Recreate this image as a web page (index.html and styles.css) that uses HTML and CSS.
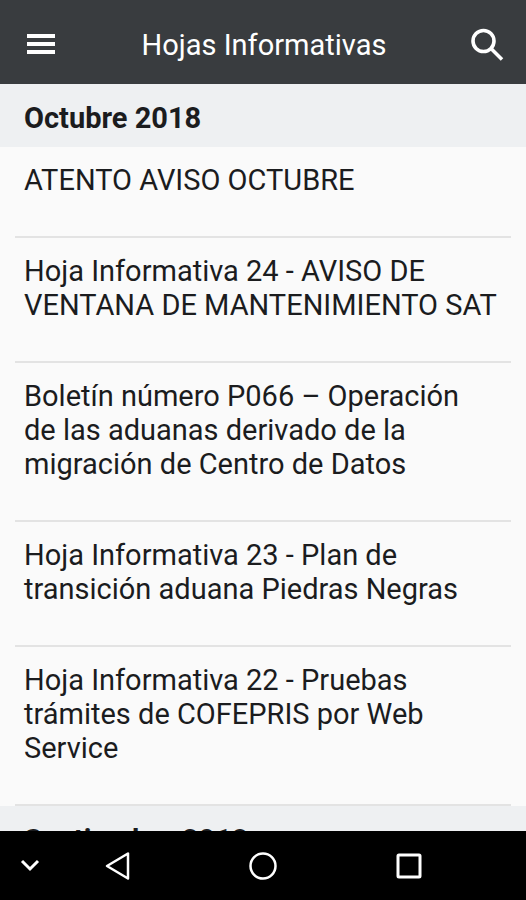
FILE: index.html
```
<!DOCTYPE html>
<html lang="es">
<head>
<meta charset="utf-8">
<meta name="viewport" content="width=device-width, initial-scale=1">
<title>Hojas Informativas</title>
<link rel="stylesheet" href="styles.css">
</head>
<body>
<header class="app-bar">
  <button class="icon-button" type="button" aria-label="Menú">
    <svg width="28" height="20" viewBox="0 0 28 20" fill="currentColor"><path d="M0 0h28v4H0zM0 8h28v4H0zM0 16h28v4H0z"/></svg>
  </button>
  <h1 class="app-title">Hojas Informativas</h1>
  <button class="icon-button" type="button" aria-label="Buscar">
    <svg width="34" height="34" viewBox="0 0 34 34" fill="none" stroke="currentColor" stroke-width="3.600"><circle cx="13.500" cy="14" r="10.500"/><path d="M21 21.500L32 32.500"/></svg>
  </button>
</header>
<main class="content">
  <section>
    <h2 class="month">Octubre 2018</h2>
    <ul class="sheets">
      <li class="sheet"><a class="sheet-link" href="#">ATENTO AVISO OCTUBRE</a></li>
      <li class="sheet"><a class="sheet-link" href="#">Hoja Informativa 24 - AVISO DE VENTANA DE MANTENIMIENTO SAT</a></li>
      <li class="sheet"><a class="sheet-link" href="#">Boletín número P066 – Operación de&nbsp;las aduanas derivado de la migración de Centro de Datos</a></li>
      <li class="sheet"><a class="sheet-link" href="#">Hoja Informativa 23 - Plan de transición aduana Piedras Negras</a></li>
      <li class="sheet"><a class="sheet-link" href="#">Hoja Informativa 22 - Pruebas trámites de COFEPRIS por Web Service</a></li>
    </ul>
  </section>
  <section>
    <h2 class="month">Septiembre 2018</h2>
  </section>
</main>
<nav class="system-bar" aria-label="Sistema">
  <button class="system-button system-button-small" type="button" aria-label="Ocultar">
    <svg width="20" height="14" viewBox="0 0 20 14" fill="none" stroke="currentColor" stroke-width="3"><path d="M2 2l8 8 8-8"/></svg>
  </button>
  <button class="system-button" type="button" aria-label="Atrás">
    <svg width="30" height="30" viewBox="0 0 30 30" fill="none" stroke="currentColor" stroke-width="2.500" stroke-linejoin="round"><path d="M26 2.500v25L5 15z"/></svg>
  </button>
  <button class="system-button" type="button" aria-label="Inicio">
    <svg width="30" height="30" viewBox="0 0 30 30" fill="none" stroke="currentColor" stroke-width="2.500"><circle cx="15" cy="15" r="12.500"/></svg>
  </button>
  <button class="system-button" type="button" aria-label="Recientes">
    <svg width="30" height="30" viewBox="0 0 30 30" fill="none" stroke="currentColor" stroke-width="3"><rect x="4" y="4" width="22" height="22" rx="1"/></svg>
  </button>
  <span class="system-button-small"></span>
</nav>
</body>
</html>
```
FILE: styles.css
```
* {
  box-sizing: border-box;
}

body {
  display: flex;
  flex-direction: column;
  height: 100vh;
  margin: 0;
  background: #fafafa;
  color: #1b1c1e;
  font-family: Roboto, sans-serif;
  font-size: 29px;
  line-height: 34px;
}

button {
  display: flex;
  align-items: center;
  justify-content: center;
  padding: 0;
  border: 0;
  background: none;
  color: inherit;
}

.app-bar {
  display: flex;
  flex: none;
  align-items: center;
  justify-content: space-between;
  padding: 20px 15px 16px 17px;
  background: #393c3f;
  color: #fff;
}

.icon-button {
  width: 48px;
  height: 48px;
}

.app-title {
  margin: 0;
  padding-top: 2px;
  font-size: 29px;
  font-weight: 400;
}

.content {
  flex: 1;
  min-height: 0;
  overflow: hidden;
}

.month {
  margin: 0;
  padding: 17px 24px 12px;
  background: #eef0f2;
  font-size: 29px;
  font-weight: 700;
}

.sheets {
  margin: 0;
  padding: 0;
  list-style: none;
}

.sheet {
  margin: 0 15px;
  border-bottom: 2px solid #e3e3e3;
}

.sheet-link {
  display: block;
  padding: 16px 9px 39px;
  color: inherit;
  text-decoration: none;
}

.system-bar {
  display: flex;
  flex: none;
  align-items: center;
  background: #000;
  color: #fff;
}

.system-button {
  flex: 1;
  height: 69px;
}

.system-button-small {
  flex: none;
  width: 44px;
  padding-left: 16px;
}
```
